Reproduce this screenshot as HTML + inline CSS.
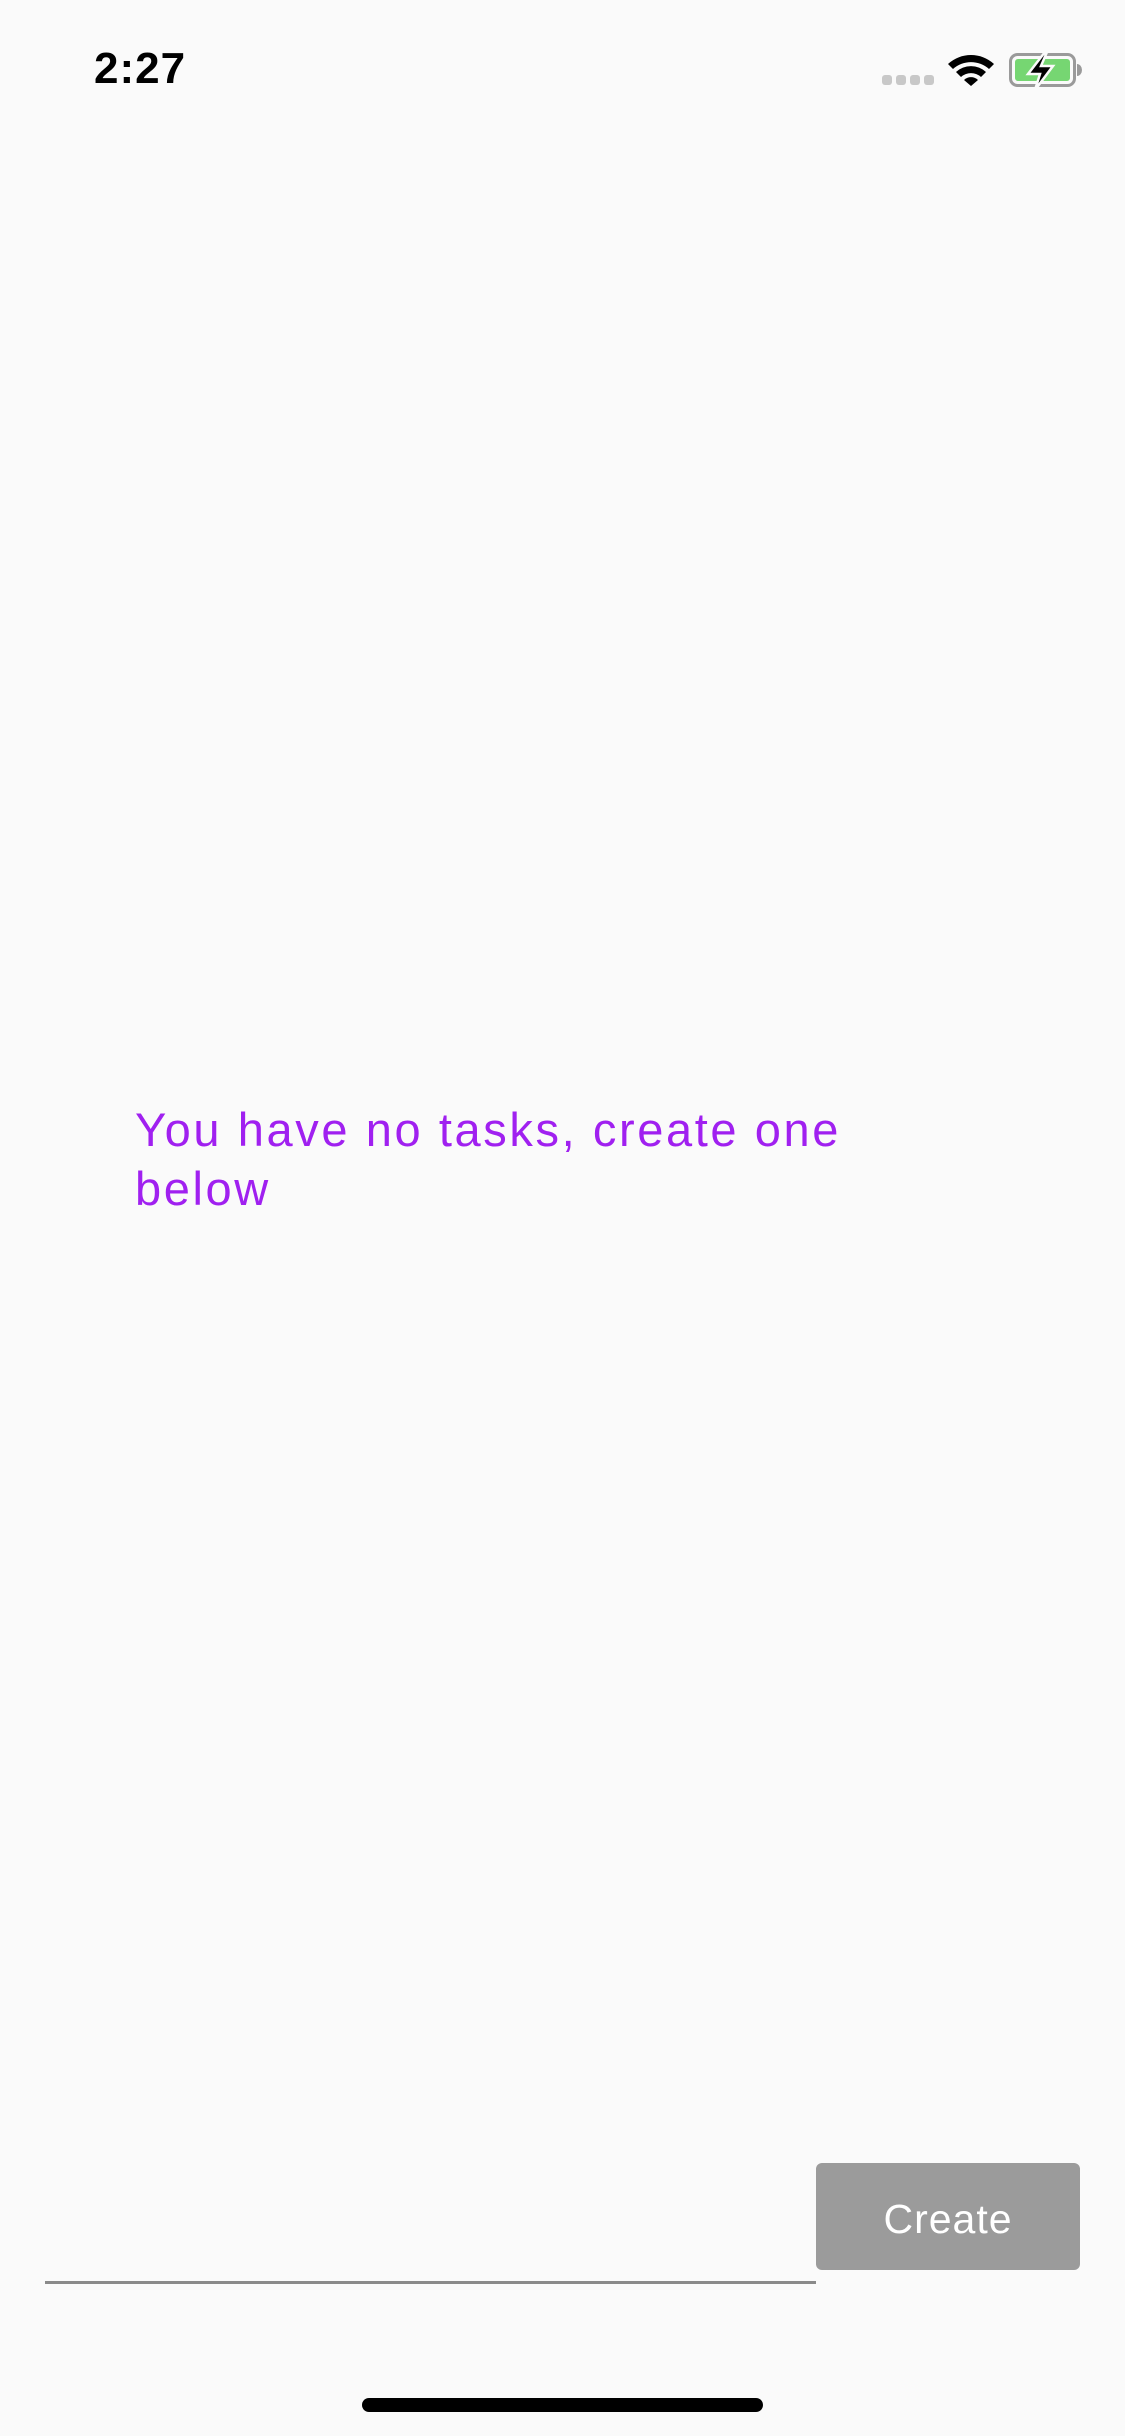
<!DOCTYPE html>
<html><head><meta charset="utf-8"><style>
html,body{margin:0;padding:0}
body{width:1125px;height:2436px;background:#fafafa;position:relative;overflow:hidden;font-family:"Liberation Sans",sans-serif}
.abs{position:absolute}
</style></head><body>
<div class="abs" style="left:94px;top:44px;font-size:44px;font-weight:bold;color:#000;line-height:50px;letter-spacing:1px">2:27</div>
<svg class="abs" style="left:878px;top:48px" width="210" height="42" viewBox="878 48 210 42">
 <rect x="882" y="75" width="10" height="10" rx="3" fill="#c8c8c8"/>
 <rect x="896" y="75" width="10" height="10" rx="3" fill="#c8c8c8"/>
 <rect x="910" y="75" width="10" height="10" rx="3" fill="#c8c8c8"/>
 <rect x="924" y="75" width="10" height="10" rx="3" fill="#c8c8c8"/>
 <path d="M948 64 A34 34 0 0 1 994 64 L989 69 A27 27 0 0 0 953 69 Z" fill="#000"/>
 <path d="M956 72 A22 22 0 0 1 986 72 L981 77 A15 15 0 0 0 961 77 Z" fill="#000"/>
 <path d="M964 80 A10 10 0 0 1 978 80 L971 86 Z" fill="#000"/>
 <rect x="1010.5" y="54.5" width="64" height="31" rx="7" fill="none" stroke="#9a9a9a" stroke-width="3"/>
 <rect x="1015" y="59" width="55" height="22" rx="3" fill="#76d672"/>
 <path d="M1077 64 a5 6 0 0 1 0 12 Z" fill="#9a9a9a"/>
 <path d="M1045 52 L1028 74 L1040 74 L1035 90 L1053 66 L1041 66 L1047 52 Z" fill="#000" stroke="#fafafa" stroke-width="2.5"/>
</svg>
<div class="abs" style="left:135px;top:1100px;font-size:47px;line-height:59px;color:#a020f0;letter-spacing:2.6px">You have no tasks, create one<br>below</div>
<div class="abs" style="left:45px;top:2281px;width:771px;height:3px;background:#8a8a8a"></div>
<div class="abs" style="left:816px;top:2163px;width:264px;height:107px;background:#9b9b9b;border-radius:6px;color:#fff;font-size:41px;line-height:113px;text-align:center;letter-spacing:1px">Create</div>
<div class="abs" style="left:362px;top:2398px;width:401px;height:14px;background:#000;border-radius:7px"></div>
</body></html>
